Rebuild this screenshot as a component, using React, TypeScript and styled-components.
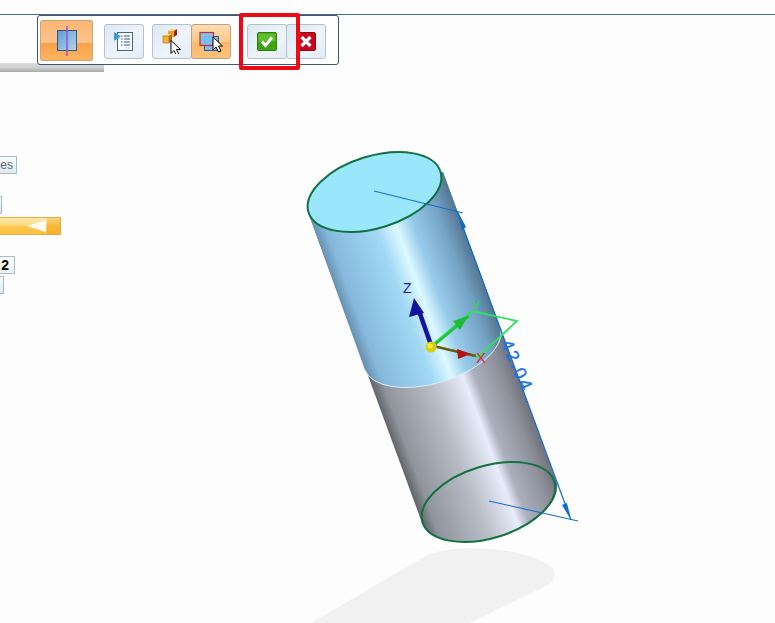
import styled, { createGlobalStyle, css } from "styled-components";

const Global = createGlobalStyle`
  html, body {
    margin: 0;
    padding: 0;
    background: #fdfdfd;
    font-family: "Liberation Sans", Arial, sans-serif;
  }
`;

const Page = styled.div`
  position: relative;
  width: 775px;
  height: 623px;
  overflow: hidden;
  background: #fdfdfd;
  padding-top: 14px;
  box-sizing: border-box;
`;

const Model = styled.svg`
  position: absolute;
  left: 0;
  top: 0;
`;

const TopRule = styled.div`
  position: relative;
  height: 1px;
  background: #47698f;
`;

const Toolbar = styled.div`
  position: relative;
  z-index: 2;
  box-sizing: border-box;
  display: flex;
  align-items: center;
  width: 302px;
  height: 50px;
  margin-left: 37px;
  padding: 1px 0 0 2px;
  background: #fff;
  border: 1px solid #43566f;
  border-radius: 3px;
`;

const ButtonPair = styled.div<{ $gap: number }>`
  display: flex;
  margin-left: ${(p) => p.$gap}px;
  margin-top: 1px;
`;

const activeLook = css`
  background: linear-gradient(#fedcb0 0%, #fdc88a 50%, #fdb869 52%, #fdc27a 100%);
  border-color: #b5a488;
`;

const ToolButton = styled.div<{ $active?: boolean }>`
  box-sizing: border-box;
  display: flex;
  align-items: center;
  justify-content: center;
  width: 40px;
  height: 35px;
  border: 1px solid #b3c1cf;
  border-radius: 3px;
  background: linear-gradient(135deg, #dce9f3 0%, #eef4f9 60%, #e2edf6 100%);
  ${(p) => p.$active && activeLook}

  & + & {
    margin-left: -1px;
  }
`;

const ModeButton = styled.div`
  box-sizing: border-box;
  display: flex;
  align-items: center;
  justify-content: center;
  width: 53px;
  height: 41px;
  border: 1px solid #c9a878;
  border-radius: 2px;
  background: linear-gradient(#fbb674 0%, #fdc58c 55%, #fba24a 57%, #fdb45f 100%);
`;

const Callout = styled.div`
  position: absolute;
  z-index: 3;
  left: 239px;
  top: 13px;
  width: 61px;
  height: 57px;
  box-sizing: border-box;
  border: 4px solid #ee0a14;
  border-radius: 2px;
`;

const Side = styled.div`
  position: relative;
  z-index: 1;
  display: flex;
  flex-direction: column;
  align-items: flex-start;
  width: 110px;
  margin-top: -2px;
  overflow: hidden;
`;

const Splitter = styled.div`
  width: 104px;
  height: 9px;
  background: linear-gradient(#dcdcdc, #d0d0d0 50%, #a9a9a9);
`;

const Chip = styled.div<{ $right: number; $top: number; $h?: number }>`
  box-sizing: border-box;
  width: 40px;
  height: ${(p) => p.$h ?? 18}px;
  margin-left: ${(p) => p.$right - 40}px;
  margin-top: ${(p) => p.$top}px;
  padding-right: 3px;
  text-align: right;
  font-size: 12px;
  line-height: 16px;
  color: #5b6670;
  border: 1px solid #a9bac8;
  background: linear-gradient(#fafcfd, #dfe8ee);
`;

const ValueChip = styled(Chip)`
  padding-right: 5px;
  font-weight: bold;
  font-size: 14px;
  color: #000;
  background: linear-gradient(#fff, #eef2f5);
`;

const Slider = styled.div`
  position: relative;
  box-sizing: border-box;
  width: 61px;
  height: 18px;
  margin-top: 3px;
  border: 1px solid #e6ac3c;
  border-left: 0;
  background: linear-gradient(#fdeab0 0%, #fdd97e 45%, #fcc64e 55%, #fbc040 100%);
`;

const SliderEnd = styled.div`
  position: absolute;
  left: 47px;
  right: 0;
  top: 0;
  bottom: 0;
  background: linear-gradient(#fbd27a, #f9b838 55%, #f7b02c);
`;

const SliderThumb = styled.svg`
  position: absolute;
  left: 24px;
  top: 0;
`;

const ink = "#1368c9";

function ModelDrawing() {
  return (
    <Model width={775} height={623} viewBox="0 0 775 623">
      <defs>
        <linearGradient id="blueBody" gradientUnits="userSpaceOnUse" x1={308} y1={212} x2={438} y2={164}>
          <stop offset="0" stopColor="#6a93b2" />
          <stop offset="0.08" stopColor="#86b8dc" />
          <stop offset="0.42" stopColor="#a2d8f6" />
          <stop offset="0.56" stopColor="#dcf9ff" />
          <stop offset="0.68" stopColor="#98cbea" />
          <stop offset="0.88" stopColor="#74a3c5" />
          <stop offset="1" stopColor="#557a96" />
        </linearGradient>
        <linearGradient id="greyBody" gradientUnits="userSpaceOnUse" x1={308} y1={212} x2={438} y2={164}>
          <stop offset="0" stopColor="#63666b" />
          <stop offset="0.08" stopColor="#90949c" />
          <stop offset="0.4" stopColor="#b8bcc6" />
          <stop offset="0.64" stopColor="#e8ecfb" />
          <stop offset="0.72" stopColor="#abafbc" />
          <stop offset="0.9" stopColor="#8e919c" />
          <stop offset="1" stopColor="#73757d" />
        </linearGradient>
      </defs>

      <path d="M311 623 L427 555 Q450 546 490 549 Q535 553 553 568 Q558 578 548 585 L470 623 Z" fill="#f1f1f1" />

      <path d="M308 212 L421 520 A69 36 -17 0 0 557 483 L443 172 Z" fill="url(#greyBody)" />
      <path d="M308 212 L443 172 L501 330 A71 35 -17 0 1 365 370 Z" fill="url(#blueBody)" />
      <path d="M365 370 A71 35 -17 0 0 501 330" fill="none" stroke="#d7f2fb" strokeWidth={1} />
      <ellipse cx={374.5} cy={192} rx={69} ry={36} transform="rotate(-17 374.5 192)" fill="#99e6fd" stroke="#12713f" strokeWidth={2} />
      <ellipse cx={488.5} cy={502} rx={69} ry={36} transform="rotate(-17 488.5 502)" fill="none" stroke="#12713f" strokeWidth={2} />

      <g stroke={ink} fill="none">
        <path d="M374 191 L463 213" strokeWidth={1} />
        <path d="M489 501 L578 521" strokeWidth={1} />
        <path d="M457 211 L571 520" strokeWidth={1.2} />
      </g>
      <path d="M458 212 L466 227 L462 230 Z" fill={ink} />
      <path d="M571 520 L562 505 L567 503 Z" fill={ink} />
      <text
        transform="translate(500 343) rotate(66)"
        fontFamily="Liberation Sans, sans-serif"
        fontSize={18}
        fill="#1f74da"
        stroke="#1f74da"
        strokeWidth={0.4}
        letterSpacing={2}
      >
        42.04
      </text>

      <path d="M431 346 L472 311 L517 321 L478 357 L431 345" fill="none" stroke="#2fe35f" strokeWidth={1.8} />
      <path d="M432 347 L469 316" stroke="#23c03c" strokeWidth={2.5} />
      <path d="M468 316 L453 321 L460 330 Z" fill="#1dbb33" />
      <path d="M431 345 L418 308" stroke="#13139c" strokeWidth={4.5} />
      <path d="M414 298 L409 317 L424 313 Z" fill="#13139c" />
      <path d="M433 346 L476 356" stroke="#6a5a12" strokeWidth={2.5} />
      <path d="M457 349 L471 354 L458 359 Z" fill="#b51414" />
      <circle cx={431} cy={347} r={5.5} fill="#d9cf10" />
      <circle cx={430} cy={346} r={2.5} fill="#f2ec4a" />
      <text x={403} y={293} fontFamily="Liberation Sans, sans-serif" fontSize={14} fill="#1a1ab0">Z</text>
      <text x={472} y={310} fontFamily="Liberation Sans, sans-serif" fontSize={13} fill="#2fd85a">Y</text>
      <text x={476} y={363} fontFamily="Liberation Sans, sans-serif" fontSize={15} fill="#e8222e">X</text>
    </Model>
  );
}

function Pointer({ x, y }: { x: number; y: number }) {
  return (
    <path
      transform={`translate(${x} ${y})`}
      d="M0 0 L0 13 L3 10 L5.5 15 L8 14 L5.5 9 L9.5 9 Z"
      fill="#fff"
      stroke="#000"
      strokeWidth={1}
    />
  );
}

export default function App() {
  return (
    <>
      <Global />
      <Page>
        <ModelDrawing />
        <TopRule />
        <Toolbar>
          <ModeButton>
            <svg width={22} height={32} viewBox="0 0 22 32">
              <defs>
                <linearGradient id="modeFace" x1="0" y1="0" x2="1" y2="1">
                  <stop offset="0" stopColor="#5a9bd8" />
                  <stop offset="1" stopColor="#b5d6f0" />
                </linearGradient>
              </defs>
              <rect x={1.5} y={5.5} width={19} height={20} fill="url(#modeFace)" stroke="#35557f" />
              <path d="M11 1 V31" stroke="#a24bc8" strokeWidth={1.4} />
            </svg>
          </ModeButton>
          <ButtonPair $gap={11}>
            <ToolButton>
              <svg width={20} height={21} viewBox="0 0 20 21">
                <rect x={3.5} y={1.5} width={15} height={18} fill="#fdfefe" stroke="#42639a" />
                <path d="M7 5 H8.5 M7 8 H8.5 M7 11 H8.5 M7 14 H8.5" stroke="#30507f" />
                <path d="M10 5 H16 M10 8 H16 M10 11 H16 M10 14 H16" stroke="#30507f" />
                <path d="M12 17 H16" stroke="#8aa0bd" strokeDasharray="1 1" />
                <path d="M0 1 L7 5.5 L0 10 Z" fill="#3b96dd" />
              </svg>
            </ToolButton>
          </ButtonPair>
          <ButtonPair $gap={8}>
            <ToolButton>
              <svg width={20} height={26} viewBox="0 0 20 26">
                <path d="M6 3 L9 1 H15 L12 3 Z" fill="#f8d776" />
                <rect x={6} y={3} width={6} height={6} fill="#eca42c" />
                <path d="M12 3 L15 1 V7 L12 9 Z" fill="#a81c2c" />
                <path d="M1 8 L4 6 H10 L7 8 Z" fill="#fbe08a" />
                <rect x={1} y={8} width={6} height={7} fill="#f3b43a" stroke="#a26a18" strokeWidth={0.6} />
                <path d="M7 8 L10 6 V13 L7 15 Z" fill="#c55f20" />
                <Pointer x={9} y={12.5} />
              </svg>
            </ToolButton>
            <ToolButton $active>
              <svg width={24} height={24} viewBox="0 0 24 24">
                <rect x={5.5} y={7.5} width={14} height={14} fill="#8ab8ea" stroke="#33548a" />
                <rect x={1} y={3.5} width={13.5} height={13} fill="#74c0f2" fillOpacity={0.9} stroke="#c6262e" strokeWidth={1.2} />
                <Pointer x={14} y={8} />
              </svg>
            </ToolButton>
          </ButtonPair>
          <ButtonPair $gap={16}>
            <ToolButton>
              <svg width={20} height={19} viewBox="0 0 20 19">
                <rect x={0.5} y={0.5} width={19} height={18} rx={1.5} fill="#3fa312" stroke="#2f7f10" />
                <rect x={1.5} y={1.5} width={17} height={8} fill="#5fbd2a" />
                <path d="M5 9.5 L8.5 13.5 L15 5.5" fill="none" stroke="#fff" strokeWidth={3} />
              </svg>
            </ToolButton>
            <ToolButton>
              <svg width={20} height={19} viewBox="0 0 20 19">
                <rect x={0.5} y={0.5} width={19} height={18} rx={1.5} fill="#c8061b" stroke="#a00414" />
                <path d="M5.5 5 L14.5 14 M14.5 5 L5.5 14" stroke="#fff" strokeWidth={3.2} />
              </svg>
            </ToolButton>
          </ButtonPair>
        </Toolbar>
        <Callout />
        <Side>
          <Splitter />
          <Chip $right={17} $top={84}>es</Chip>
          <Chip $right={2} $top={22} />
          <Slider>
            <SliderEnd />
            <SliderThumb width={24} height={16} viewBox="0 0 24 16">
              <path d="M3 8 L22 2 V14 Z" fill="#fffdf2" />
            </SliderThumb>
          </Slider>
          <ValueChip $right={15} $top={21}>2</ValueChip>
          <Chip $right={4} $top={2} />
        </Side>
      </Page>
    </>
  );
}
